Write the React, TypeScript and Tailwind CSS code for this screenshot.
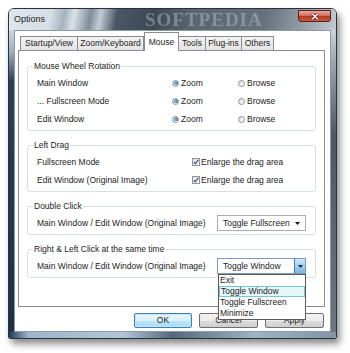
import React from 'react'

function Radio({ checked }: { checked?: boolean }) {
  return (
    <span className="flex h-[7px] w-[7px] shrink-0 items-center justify-center rounded-full border border-[#8f9499] bg-[linear-gradient(135deg,#dcdcdc,#fafafa)]">
      {checked && <span className="h-[4px] w-[4px] rounded-full bg-[radial-gradient(circle_at_35%_35%,#7cc0ec,#1b5c90)]" />}
    </span>
  )
}

function Check() {
  return (
    <span className="flex h-[8px] w-[8px] shrink-0 items-center justify-center border border-[#8f9499] bg-[linear-gradient(135deg,#e2e2e2,#fbfbfb)]">
      <svg width="6" height="6" viewBox="0 0 6 6">
        <path d="M0.8 3.2 L2.3 4.8 L5.3 0.8" fill="none" stroke="#3b4f8f" strokeWidth="1.2" />
      </svg>
    </span>
  )
}

function Group({ title, children }: { title: string; children: React.ReactNode }) {
  return (
    <div className="relative rounded-[3px] border border-[#d5dfe5] pb-[2px] pt-[7px]">
      <span className="absolute left-[5px] top-[-6px] bg-white px-[1px] leading-[11px]">{title}</span>
      {children}
    </div>
  )
}

function RadioRow({ label }: { label: string }) {
  return (
    <div className="flex h-[18px] items-center pl-[9px]">
      <span className="w-[135px]">{label}</span>
      <span className="flex w-[66px] items-center gap-[2px]">
        <Radio checked />
        <span>Zoom</span>
      </span>
      <span className="flex items-center gap-[2px]">
        <Radio />
        <span>Browse</span>
      </span>
    </div>
  )
}

function CheckRow({ label }: { label: string }) {
  return (
    <div className="flex h-[18px] items-center pl-[9px]">
      <span className="w-[155px]">{label}</span>
      <span className="flex items-center gap-[1px]">
        <Check />
        <span>Enlarge the drag area</span>
      </span>
    </div>
  )
}

function Arrow({ color = '#111' }: { color?: string }) {
  return (
    <svg width="5" height="3" viewBox="0 0 5 3">
      <path d="M0 0 H5 L2.5 3 Z" fill={color} />
    </svg>
  )
}

const tabs = [
  { label: 'Startup/View', w: 'w-[58px]' },
  { label: 'Zoom/Keyboard', w: 'w-[67px]' },
  { label: 'Mouse', w: 'w-[35px]', active: true },
  { label: 'Tools', w: 'w-[28px]' },
  { label: 'Plug-ins', w: 'w-[37px]' },
  { label: 'Others', w: 'w-[33px]' },
]

export default function App() {
  return (
    <div className="h-[353px] w-[350px] overflow-hidden bg-white pl-[8px] pt-[8px] font-['Liberation_Sans','Arial',sans-serif] text-[8.5px] leading-[11px] text-[#222]">
      <div className="flex h-[331px] w-[329px] flex-col overflow-hidden rounded-b-[2px] rounded-t-[6px] border border-[#27323f] shadow-[3px_5px_7px_rgba(0,0,0,0.45)]">
        {/* title bar */}
        <div className="relative flex h-[21px] items-center bg-[linear-gradient(100deg,#dfe6ed_0%,#d6dee6_13%,#a5b1bd_17%,#dbe2e9_20%,#7f8d9b_25%,#c3ccd5_28%,#4a5765_33%,#3d4855_44%,#5a6571_56%,#66717c_78%,#8a949e_87%,#c2cad1_100%)] pl-[5px]">
          <span className="text-[9px] text-[#1a1a1a]">Options</span>
          <span className="absolute left-[136px] top-[1px] font-['Liberation_Serif',serif] text-[19px] font-bold leading-[20px] tracking-[1px] text-[#aebbc8]/50 blur-[0.6px]">
            SOFTPEDIA
          </span>
          <div className="absolute right-[5px] top-[1px] flex h-[12px] w-[33px] items-center justify-center rounded-b-[3px] border border-[#5e2019] bg-[linear-gradient(180deg,#e9a99b_0%,#d4705f_45%,#b53a24_55%,#c9593f_100%)]">
            <svg width="8" height="7" viewBox="0 0 8 7">
              <path d="M1 0.8 L7 6.2 M7 0.8 L1 6.2" stroke="#3a1410" strokeWidth="2.6" />
              <path d="M1 0.8 L7 6.2 M7 0.8 L1 6.2" stroke="#ffffff" strokeWidth="1.5" />
            </svg>
          </div>
        </div>

        <div className="flex flex-1">
          <div className="w-[5px] bg-[linear-gradient(180deg,#cdd6df_0%,#a3b0be_7%,#2e3e56_17%,#1f2f48_100%)]" />
          {/* client */}
          <div className="relative flex w-[317px] flex-col border border-[#8d99a6] bg-white">
            {/* tabs */}
            <div className="ml-[6px] mt-[1px] flex h-[18px] items-end">
              {tabs.map((t) =>
                t.active ? (
                  <div
                    key={t.label}
                    className={`relative z-10 -mb-px flex h-[19px] items-start justify-center border border-b-0 border-[#898c95] bg-white pt-[4px] ${t.w}`}
                  >
                    {t.label}
                  </div>
                ) : (
                  <div
                    key={t.label}
                    className={`-ml-px flex h-[14px] items-center justify-center border border-b-0 border-[#898c95] bg-[linear-gradient(180deg,#f3f3f3,#e4e4e4)] ${t.w}`}
                  >
                    {t.label}
                  </div>
                )
              )}
            </div>
            {/* panel */}
            <div className="ml-[3px] flex h-[257px] w-[307px] flex-col gap-[14px] border border-[#898c95] px-[8px] pt-[15px]">
              <Group title="Mouse Wheel Rotation">
                <RadioRow label="Main Window" />
                <RadioRow label="... Fullscreen Mode" />
                <RadioRow label="Edit Window" />
              </Group>
              <Group title="Left Drag">
                <CheckRow label="Fullscreen Mode" />
                <CheckRow label="Edit Window (Original Image)" />
              </Group>
              <Group title="Double Click">
                <div className="flex h-[18px] items-center pl-[9px] pr-[9px]">
                  <span className="flex-1">Main Window / Edit Window (Original Image)</span>
                  <div className="flex h-[16px] w-[89px] items-center border border-[#abadb3] bg-white pl-[5px] pr-[5px]">
                    <span className="flex-1">Toggle Fullscreen</span>
                    <Arrow />
                  </div>
                </div>
              </Group>
              <Group title="Right &amp; Left Click at the same time">
                <div className="flex h-[18px] items-center pl-[9px] pr-[9px]">
                  <span className="flex-1">Main Window / Edit Window (Original Image)</span>
                  <div className="relative flex h-[16px] w-[89px] items-center border border-[#7a9cc0] bg-white pl-[5px]">
                    <span className="flex-1">Toggle Window</span>
                    <div className="flex h-full w-[11px] items-center justify-center border-l border-[#3c7fb1] bg-[linear-gradient(180deg,#cde8f8,#79b6e2)]">
                      <Arrow color="#0f2a44" />
                    </div>
                    <div className="absolute left-[0px] top-[15px] z-20 flex w-[88px] flex-col border border-[#5a5a5a] bg-white">
                      <span className="h-[11px] px-[1px]">Exit</span>
                      <span className="h-[11px] border border-[#78c5d3] bg-[#e6f7f8] px-[1px] leading-[9px]">Toggle Window</span>
                      <span className="h-[11px] px-[1px]">Toggle Fullscreen</span>
                      <span className="h-[11px] px-[1px]">Minimize</span>
                    </div>
                  </div>
                </div>
              </Group>
            </div>
            {/* buttons */}
            <div className="mr-[6px] mt-[6px] flex justify-end gap-[7px]">
              <button className="flex h-[15px] w-[58px] items-center justify-center rounded-[2px] border border-[#3c7fb1] bg-[linear-gradient(180deg,#eaf6fd_0%,#d9f0fc_50%,#bee6fd_51%,#a7d9f5_100%)] shadow-[inset_0_0_0_1px_#c4e6f8]">
                OK
              </button>
              <button className="flex h-[15px] w-[59px] items-center justify-center rounded-[2px] border border-[#707070] bg-[linear-gradient(180deg,#f2f2f2_0%,#ebebeb_50%,#dddddd_51%,#cfcfcf_100%)]">
                Cancel
              </button>
              <button className="flex h-[15px] w-[59px] items-center justify-center rounded-[2px] border border-[#707070] bg-[linear-gradient(180deg,#f2f2f2_0%,#ebebeb_50%,#dddddd_51%,#cfcfcf_100%)]">
                Apply
              </button>
            </div>
          </div>
          <div className="w-[5px] bg-[linear-gradient(180deg,#c9d1d9_0%,#98a2ac_12%,#4f5862_35%,#6e7781_100%)]" />
        </div>
        <div className="h-[6px] bg-[linear-gradient(90deg,#23375a_0%,#9fb5cc_6%,#b3c5d7_35%,#55677c_50%,#9fb2c6_75%,#8395a8_100%)]" />
      </div>
    </div>
  )
}
